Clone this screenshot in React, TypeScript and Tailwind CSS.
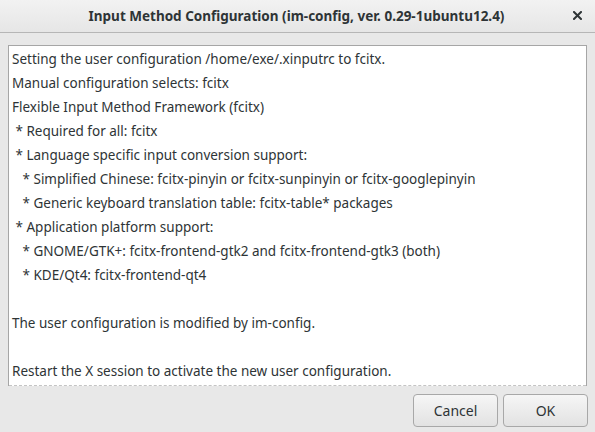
import React from 'react';

const lines: string[] = [
    'Setting the user configuration /home/exe/.xinputrc to fcitx.',
    'Manual configuration selects: fcitx',
    'Flexible Input Method Framework (fcitx)',
    ' * Required for all: fcitx',
    ' * Language specific input conversion support:',
    '   * Simplified Chinese: fcitx-pinyin or fcitx-sunpinyin or fcitx-googlepinyin',
    '   * Generic keyboard translation table: fcitx-table* packages',
    ' * Application platform support:',
    '   * GNOME/GTK+: fcitx-frontend-gtk2 and fcitx-frontend-gtk3 (both)',
    '   * KDE/Qt4: fcitx-frontend-qt4',
    '',
    'The user configuration is modified by im-config.',
    '',
    'Restart the X session to activate the new user configuration.',
];

const font = { fontFamily: '"Noto Sans", "Open Sans", sans-serif' };

export default function App() {
    return (
        <div className="w-[595px] h-[432px] bg-[#e8e8e8] flex flex-col text-[#2e3436] overflow-hidden" style={font}>
            {/* Title bar */}
            <div className="h-[33px] shrink-0 flex items-center relative bg-gradient-to-b from-[#f2f2f2] to-[#e6e6e6] border-b border-[#b6b6b6]">
                <div className="flex-1 text-center text-[13.5px] font-bold pr-[2px]">
                    Input Method Configuration (im-config, ver. 0.29-1ubuntu12.4)
                </div>
                <button className="absolute right-[12px] top-[9px] w-[12px] h-[12px] flex items-center justify-center">
                    <svg width="9" height="9" viewBox="0 0 9 9">
                        <path d="M1 1 L8 8 M8 1 L1 8" stroke="#2e3436" strokeWidth="2" strokeLinecap="square" />
                    </svg>
                </button>
            </div>

            {/* Message box */}
            <div className="mt-[12px] mx-[8px] h-[341px] bg-white border border-[#a6a6a6] border-b-0 flex flex-col relative">
                <div className="pl-[3px] pt-[1px] flex flex-col">
                    {lines.map((l, i) => (
                        <div key={i} className="h-[24px] leading-[24px] text-[13.5px] whitespace-pre">
                            {l || '\u00a0'}
                        </div>
                    ))}
                </div>
                <div className="absolute left-0 right-0 bottom-0 border-b border-dashed border-[#c4c4c4]" />
            </div>

            {/* Buttons */}
            <div className="flex justify-end gap-[5px] mt-[8px] pr-[7px]">
                <button className="w-[85px] h-[33px] rounded-[4px] border border-[#a8a8a8] bg-gradient-to-b from-[#f6f6f6] to-[#e2e2e2] text-[14px] text-[#2e3436]">
                    Cancel
                </button>
                <button className="w-[85px] h-[33px] rounded-[4px] border border-[#a8a8a8] bg-gradient-to-b from-[#f6f6f6] to-[#e2e2e2] text-[14px] text-[#2e3436]">
                    OK
                </button>
            </div>
        </div>
    );
}
